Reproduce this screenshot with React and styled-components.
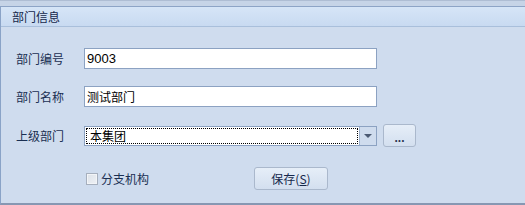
import React from 'react'
import styled, { createGlobalStyle } from 'styled-components'

const GlobalStyle = createGlobalStyle`
  html, body {
    margin: 0;
    padding: 0;
    background: #cfdcee;
  }
  body {
    font-family: "Liberation Sans", "Noto Sans CJK SC", sans-serif;
    font-size: 12px;
  }
`

const Page = styled.div`
  width: 525px;
  height: 205px;
  display: flex;
  flex-direction: column;
  box-sizing: border-box;
`

const TopStrip = styled.div`
  height: 6px;
  background: #c6d4e7;
  border-top: 1px solid #aebdd3;
  box-sizing: border-box;
  flex-shrink: 0;
`

const GroupBox = styled.div`
  flex: 1;
  display: flex;
  flex-direction: column;
  border-top: 1px solid #8da4c6;
  border-left: 1px solid #8aa3c7;
  border-bottom: 2px solid #8797b2;
  background: #cfdcee;
`

const Header = styled.div`
  height: 19px;
  display: flex;
  align-items: center;
  padding-left: 11px;
  background: linear-gradient(to bottom, #d6e5f7, #c8daf1);
  border-bottom: 1px solid #a9bfdb;
  color: #15284b;
  font-family: "Noto Sans CJK SC", sans-serif;
  font-size: 12px;
`

const Body = styled.div`
  display: flex;
  flex-direction: column;
  padding: 21px 0 0 15px;
  gap: 17px;
`

const Row = styled.div`
  display: flex;
  align-items: center;
  height: ${p => p.$h || 21}px;
`

const Label = styled.div`
  width: 68px;
  color: #1a2f52;
  font-family: "Noto Sans CJK SC", sans-serif;
  font-size: 12px;
`

const TextBox = styled.div`
  width: 293px;
  height: 21px;
  box-sizing: border-box;
  border: 1px solid #8ca2c2;
  background: #fff;
  display: flex;
  align-items: center;
  padding-left: 2px;
  color: #000;
  font-family: ${p => (p.$num ? '"Liberation Sans"' : '"Noto Sans CJK SC"')}, sans-serif;
  font-size: ${p => (p.$num ? 13 : 12)}px;
`

const Combo = styled.div`
  width: 293px;
  height: 20px;
  box-sizing: border-box;
  border: 1px solid #8ca2c2;
  background: #fff;
  display: flex;
`

const ComboText = styled.div`
  flex: 1;
  margin: 1px;
  border: 1px dotted #000;
  display: flex;
  align-items: center;
  padding-left: 3px;
  font-family: "Noto Sans CJK SC", sans-serif;
  font-size: 12px;
  color: #000;
`

const DropButton = styled.div`
  width: 16px;
  border-left: 1px solid #9fb3cf;
  background: #cfdcee;
  display: flex;
  align-items: center;
  justify-content: center;
`

const Arrow = styled.div`
  width: 0;
  height: 0;
  border-left: 4px solid transparent;
  border-right: 4px solid transparent;
  border-top: 4px solid #4b5a73;
`

const SmallButton = styled.div`
  width: 33px;
  height: 23px;
  margin-left: 6px;
  box-sizing: border-box;
  border: 1px solid #aab8cc;
  border-radius: 3px;
  background: linear-gradient(to bottom, #e6eef8, #d3dfef);
  display: flex;
  align-items: center;
  justify-content: center;
  padding-top: 4px;
  color: #2c3550;
  font-size: 12px;
  font-weight: bold;
`

const BottomRow = styled.div`
  display: flex;
  align-items: center;
  height: 23px;
  margin-top: 20px;
  padding-left: 85px;
`

const CheckGroup = styled.div`
  width: 168px;
  display: flex;
  align-items: center;
  gap: 3px;
  color: #1a2f52;
  font-family: "Noto Sans CJK SC", sans-serif;
  font-size: 12px;
`

const CheckBox = styled.div`
  width: 12px;
  height: 12px;
  box-sizing: border-box;
  border: 1px solid #a6afbd;
  background: linear-gradient(135deg, #dde2e9, #eef1f5);
  box-shadow: inset 0 0 0 1px #f2f4f7;
`

const SaveButton = styled.div`
  width: 74px;
  height: 23px;
  box-sizing: border-box;
  border: 1px solid #aab8cc;
  border-radius: 3px;
  background: linear-gradient(to bottom, #e6eef8, #d3dfef);
  display: flex;
  align-items: center;
  justify-content: center;
  color: #15284b;
  font-family: "Noto Sans CJK SC", sans-serif;
  font-size: 12px;

  u {
    text-decoration: underline;
  }
`

export default function App() {
  return (
    <>
      <GlobalStyle />
      <Page>
        <TopStrip />
        <GroupBox>
          <Header>部门信息</Header>
          <Body>
            <Row>
              <Label>部门编号</Label>
              <TextBox $num>9003</TextBox>
            </Row>
            <Row>
              <Label>部门名称</Label>
              <TextBox>测试部门</TextBox>
            </Row>
            <Row $h={23}>
              <Label>上级部门</Label>
              <Combo>
                <ComboText>本集团</ComboText>
                <DropButton>
                  <Arrow />
                </DropButton>
              </Combo>
              <SmallButton>...</SmallButton>
            </Row>
          </Body>
          <BottomRow>
            <CheckGroup>
              <CheckBox />
              <span>分支机构</span>
            </CheckGroup>
            <SaveButton>
              保存(<u>S</u>)
            </SaveButton>
          </BottomRow>
        </GroupBox>
      </Page>
    </>
  )
}
